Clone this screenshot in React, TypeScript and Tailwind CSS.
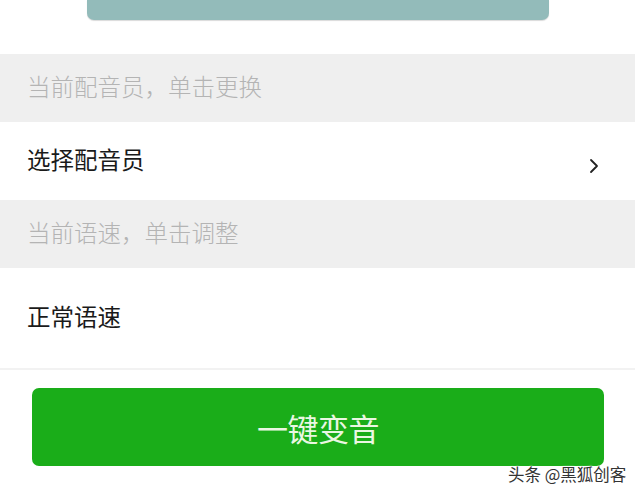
import React from "react";

export default function App() {
  const font = { fontFamily: '"Noto Sans CJK SC", "Noto Sans", sans-serif' };
  return (
    <div className="relative w-[640px] h-[497px] bg-white overflow-hidden" style={font}>
      <div className="flex justify-start">
        <div className="ml-[87px] w-[462px] h-[20px] bg-[#93bbba] rounded-b-[7px] shadow-[0_1px_1px_rgba(0,0,0,0.15)]" />
      </div>
      <div className="h-[34px]" />
      <div className="w-[635px] h-[68px] bg-[#efefef] flex items-center pl-[27px] pb-[3px]">
        <span className="text-[23.5px] text-[#b4b4b4] leading-none font-light">当前配音员，单击更换</span>
      </div>
      <div className="w-[635px] h-[78px] flex items-center pl-[27px] pr-[36px] justify-between pb-[3px]">
        <span className="text-[23.5px] text-[#1a1a1a] leading-none">选择配音员</span>
        <svg width="10" height="16" viewBox="0 0 10 16" className="mt-[12px]">
          <path d="M2 2 L8 8 L2 14" fill="none" stroke="#222" strokeWidth="1.8" strokeLinecap="round" strokeLinejoin="round" />
        </svg>
      </div>
      <div className="w-[635px] h-[68px] bg-[#efefef] flex items-center pl-[27px] pb-[3px]">
        <span className="text-[23.5px] text-[#b4b4b4] leading-none font-light">当前语速，单击调整</span>
      </div>
      <div className="w-[635px] h-[100px] flex items-center pl-[27px] pb-[3px]">
        <span className="text-[23.5px] text-[#1a1a1a] leading-none">正常语速</span>
      </div>
      <div className="w-[635px] h-[2px] bg-[#f2f2f2]" />
      <div className="h-[18px]" />
      <div className="ml-[32px] w-[572px] h-[78px] bg-[#1aad19] rounded-[7px] flex items-center justify-center">
        <span className="text-[31px] text-[#eaf7e2] leading-none tracking-[-0.5px]">一键变音</span>
      </div>
      <div className="absolute left-[508px] top-[466px] text-[16.5px] leading-none text-[#333] [text-shadow:0_0_2px_#fff,0_0_2px_#fff]">
        头条 @黑狐创客
      </div>
    </div>
  );
}
